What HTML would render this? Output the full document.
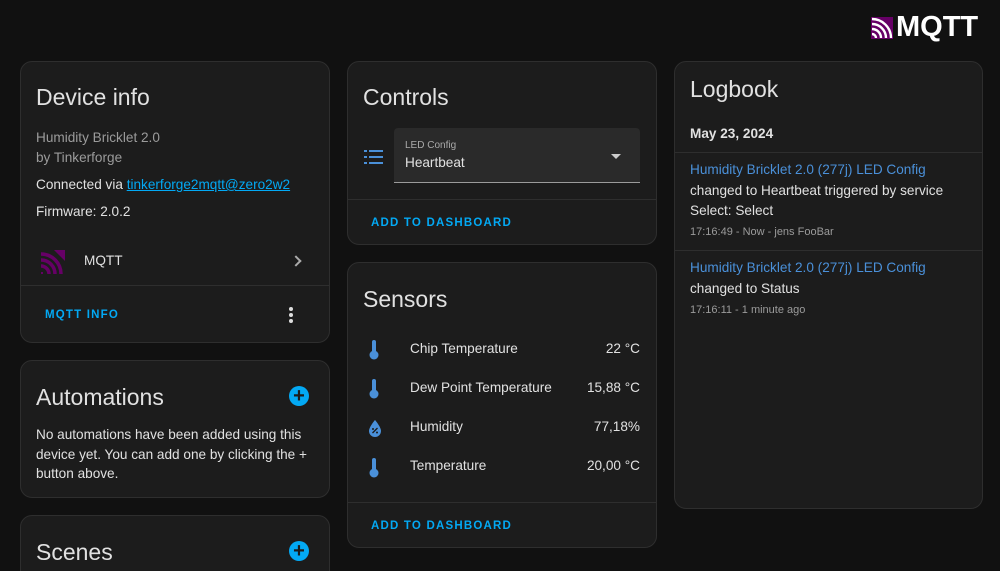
<!DOCTYPE html>
<html><head><meta charset="utf-8"><style>
*{box-sizing:border-box;margin:0;padding:0}
html,body{width:1000px;height:571px;overflow:hidden}
body{background:#111111;font-family:"Liberation Sans",sans-serif;color:#e1e1e1;position:relative}
.card{position:absolute;background:#1c1c1c;border:1px solid #2e2e2e;border-radius:12px;overflow:hidden}
.h{position:absolute;font-size:23px;color:#e1e1e1}
.t{position:absolute;font-size:13.6px}
.sec{color:#9b9b9b}
.btn{position:absolute;font-size:11.5px;font-weight:bold;letter-spacing:1.2px;color:#03a9f4}
.line{position:absolute;left:0;right:0;height:1px;background:#2e2e2e}
.blue{color:#4a90d9}
</style></head><body>

<div style="position:absolute;left:871px;top:17px;">
<svg width="22" height="22" viewBox="0 0 22 22"><rect width="22" height="22" fill="#660066"/><path d="M1 7a14 14 0 0 1 14 14M1 12a9 9 0 0 1 9 9M1 17a4 4 0 0 1 4 4M1 2a19 19 0 0 1 19 19" stroke="#fff" stroke-width="2.4" fill="none"/></svg>
</div>
<div style="position:absolute;left:896px;top:11px;font-size:29px;font-weight:bold;color:#fff">MQTT</div>

<div class="card" style="left:20px;top:61px;width:310px;height:282px">
<div class="h" style="left:15px;top:22px">Device info</div>
<div class="t sec" style="left:15px;top:68px">Humidity Bricklet 2.0</div>
<div class="t sec" style="left:15px;top:88px">by Tinkerforge</div>
<div class="t" style="left:15px;top:115px">Connected via <span style="color:#03a9f4;text-decoration:underline">tinkerforge2mqtt@zero2w2</span></div>
<div class="t" style="left:15px;top:142px">Firmware: 2.0.2</div>
<svg style="position:absolute;left:20px;top:188px" width="24" height="24" viewBox="0 0 24 24"><path d="M0 4a20 20 0 0 1 20 20M0 10a14 14 0 0 1 14 14M0 16a8 8 0 0 1 8 8" stroke="#660066" stroke-width="3.5" fill="none"/><path d="M0 0h24v24" stroke="none" fill="none"/><path d="M13 0h11v11z" fill="#660066"/><path d="M0 22h2v2h-2z" fill="#660066"/></svg>
<div class="t" style="left:63px;top:191px">MQTT</div>
<div style="position:absolute;left:271px;top:195px;width:8px;height:8px;border-right:2px solid #aaa;border-top:2px solid #aaa;transform:rotate(45deg)"></div>
<div class="line" style="top:223px"></div>
<div class="btn" style="left:24px;top:247px">MQTT INFO</div>
<div style="position:absolute;left:268px;top:245px;width:4px">
<div style="width:4px;height:4px;border-radius:2px;background:#ddd;margin-bottom:2px"></div><div style="width:4px;height:4px;border-radius:2px;background:#ddd;margin-bottom:2px"></div><div style="width:4px;height:4px;border-radius:2px;background:#ddd"></div></div>
</div>

<div class="card" style="left:20px;top:360px;width:310px;height:138px">
<div class="h" style="left:15px;top:23px">Automations</div>
<div style="position:absolute;left:268px;top:25px;width:20px;height:20px;border-radius:10px;background:#03a9f4;color:#1c1c1c;font-weight:bold;font-size:20px;line-height:20px;text-align:center">+</div>
<div class="t" style="left:15px;top:64px;width:285px;line-height:19.5px">No automations have been added using this device yet. You can add one by clicking the + button above.</div>
</div>

<div class="card" style="left:20px;top:515px;width:310px;height:80px">
<div class="h" style="left:15px;top:23px">Scenes</div>
<div style="position:absolute;left:268px;top:25px;width:20px;height:20px;border-radius:10px;background:#03a9f4;color:#1c1c1c;font-weight:bold;font-size:20px;line-height:20px;text-align:center">+</div>
</div>

<div class="card" style="left:347px;top:61px;width:310px;height:184px">
<div class="h" style="left:15px;top:22px">Controls</div>
<svg style="position:absolute;left:16px;top:87px" width="20" height="16" viewBox="0 0 20 16" fill="#4a90d9"><rect x="0" y="1" width="3" height="2"/><rect x="5" y="1" width="14" height="2"/><rect x="0" y="7" width="3" height="2"/><rect x="5" y="7" width="14" height="2"/><rect x="0" y="13" width="3" height="2"/><rect x="5" y="13" width="14" height="2"/></svg>
<div style="position:absolute;left:46px;top:66px;width:246px;height:55px;background:#2a2a2a;border-radius:4px 4px 0 0;border-bottom:1px solid #9b9b9b"></div>
<div style="position:absolute;left:57px;top:78px;font-size:10px;color:#aaa">LED Config</div>
<div class="t" style="left:57px;top:93px">Heartbeat</div>
<div style="position:absolute;left:263px;top:92px;width:0;height:0;border-left:5px solid transparent;border-right:5px solid transparent;border-top:5px solid #ccc"></div>
<div class="line" style="top:137px"></div>
<div class="btn" style="left:23px;top:155px">ADD TO DASHBOARD</div>
</div>

<div class="card" style="left:347px;top:262px;width:310px;height:286px">
<div class="h" style="left:15px;top:23px">Sensors</div>
<svg style="position:absolute;left:20px;top:76px" width="12" height="22" viewBox="0 0 12 22"><rect x="4" y="1" width="4" height="14" rx="2" fill="#4a90d9"/><circle cx="6" cy="16" r="4.5" fill="#4a90d9"/></svg>
<div class="t" style="left:62px;top:78px">Chip Temperature</div><div class="t" style="right:16px;top:78px">22 °C</div>
<svg style="position:absolute;left:20px;top:115px" width="12" height="22" viewBox="0 0 12 22"><rect x="4" y="1" width="4" height="14" rx="2" fill="#4a90d9"/><circle cx="6" cy="16" r="4.5" fill="#4a90d9"/></svg>
<div class="t" style="left:62px;top:117px">Dew Point Temperature</div><div class="t" style="right:16px;top:117px">15,88 °C</div>
<svg style="position:absolute;left:20px;top:156px" width="14" height="18" viewBox="0 0 14 18"><path d="M7 1C7 1 1 8 1 12a6 6 0 0 0 12 0C13 8 7 1 7 1z" fill="#4a90d9"/><path d="M4.5 14l5-5" stroke="#1c1c1c" stroke-width="1.3"/><circle cx="5" cy="10" r="1" fill="#1c1c1c"/><circle cx="9" cy="13.5" r="1" fill="#1c1c1c"/></svg>
<div class="t" style="left:62px;top:156px">Humidity</div><div class="t" style="right:16px;top:156px">77,18%</div>
<svg style="position:absolute;left:20px;top:194px" width="12" height="22" viewBox="0 0 12 22"><rect x="4" y="1" width="4" height="14" rx="2" fill="#4a90d9"/><circle cx="6" cy="16" r="4.5" fill="#4a90d9"/></svg>
<div class="t" style="left:62px;top:195px">Temperature</div><div class="t" style="right:16px;top:195px">20,00 °C</div>
<div class="line" style="top:239px"></div>
<div class="btn" style="left:23px;top:257px">ADD TO DASHBOARD</div>
</div>

<div class="card" style="left:674px;top:61px;width:309px;height:448px">
<div class="h" style="left:15px;top:14px">Logbook</div>
<div class="t" style="left:15px;top:64px;font-weight:bold">May 23, 2024</div>
<div class="line" style="top:90px"></div>
<div class="t blue" style="left:15px;top:100px">Humidity Bricklet 2.0 (277j) LED Config</div>
<div class="t" style="left:15px;top:121px">changed to Heartbeat triggered by service</div>
<div class="t" style="left:15px;top:141px">Select: Select</div>
<div class="t sec" style="left:15px;top:164px;font-size:11px">17:16:49 - Now - jens FooBar</div>
<div class="line" style="top:188px"></div>
<div class="t blue" style="left:15px;top:198px">Humidity Bricklet 2.0 (277j) LED Config</div>
<div class="t" style="left:15px;top:219px">changed to Status</div>
<div class="t sec" style="left:15px;top:242px;font-size:11px">17:16:11 - 1 minute ago</div>
</div>
</body></html>
